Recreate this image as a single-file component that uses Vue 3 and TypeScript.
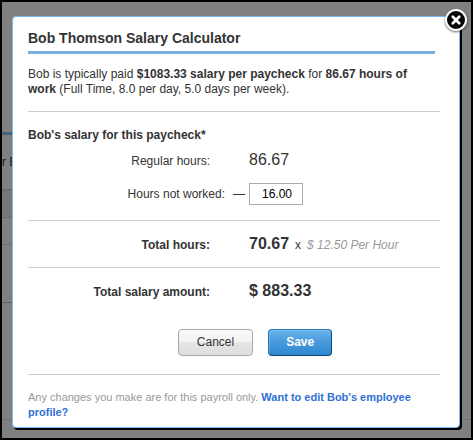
<script setup lang="ts">
import { computed, ref } from 'vue'

const open = ref(true)
const regularHours = 86.67
const salary = 1083.33
const notWorked = ref('16.00')

const totalHours = computed(() => regularHours - (parseFloat(notWorked.value) || 0))
const totalSalary = computed(() => Math.floor((totalHours.value * salary * 100) / regularHours) / 100)

function reset(): void {
  notWorked.value = '16.00'
}
</script>

<template>
  <div class="page">
    <div class="backdrop" aria-hidden="true">
      <div class="bar"></div>
      <div class="column-head">r E</div>
      <div class="band"></div>
      <div class="row"></div>
      <div class="panel"></div>
      <div class="footer"></div>
    </div>

    <section v-if="open" class="dialog" role="dialog" aria-labelledby="title">
      <button class="close" type="button" aria-label="Close" @click="open = false">
        <svg viewBox="0 0 26 26" width="26" height="26">
          <circle cx="13" cy="13" r="10" fill="#050505" stroke="#fff" stroke-width="2" />
          <path d="M9.8 9.8l6.4 6.4M16.2 9.8l-6.4 6.4" stroke="#fff" stroke-width="2.8" stroke-linecap="round" />
        </svg>
      </button>

      <h1 id="title">Bob Thomson Salary Calculator</h1>
      <p class="intro">
        Bob is typically paid <b>$1083.33 salary per paycheck</b> for <b>86.67 hours of work</b>
        (Full Time, 8.0 per day, 5.0 days per week).
      </p>

      <form @submit.prevent="open = false">
        <div class="group hours">
          <h2>Bob's salary for this paycheck*</h2>
          <div class="line">
            <span class="label">Regular hours:</span>
            <span class="value">{{ regularHours.toFixed(2) }}</span>
          </div>
          <div class="line entry">
            <label class="label wide" for="not-worked">Hours not worked:</label>
            <span class="minus">—</span>
            <input id="not-worked" v-model="notWorked" type="text" inputmode="decimal" />
          </div>
        </div>

        <div class="group total">
          <span class="label strong">Total hours:</span>
          <output class="value strong" for="not-worked">{{ totalHours.toFixed(2) }}</output>
          <span class="times">x</span>
          <em>$ 12.50 Per Hour</em>
        </div>

        <div class="group amount">
          <div class="line">
            <span class="label strong">Total salary amount:</span>
            <output class="value strong" for="not-worked">$ {{ totalSalary.toFixed(2) }}</output>
          </div>
          <div class="actions">
            <button class="btn" type="button" @click="reset">Cancel</button>
            <button class="btn primary" type="submit">Save</button>
          </div>
        </div>
      </form>

      <p class="note">
        Any changes you make are for this payroll only.
        <a href="#profile">Want to edit Bob's employee profile?</a>
      </p>
    </section>
  </div>
</template>

<style>
body {
  background: #808080;
}
</style>

<style scoped>
.page {
  box-sizing: border-box;
  display: grid;
  min-height: 100vh;
  border: 2px solid #000;
  background: #808080;
  color: #333;
  font: 12px/15px "Liberation Sans", Arial, sans-serif;
}
.backdrop,
.dialog {
  grid-area: 1 / 1;
}
.backdrop {
  display: flex;
  flex-direction: column;
  padding-top: 130px;
  color: #1a1a1a;
  overflow: hidden;
}
.bar,
.column-head,
.band,
.row,
.panel {
  margin-right: 24px;
}
.bar {
  height: 3px;
  background: #44637f;
}
.column-head {
  height: 34px;
  padding-top: 20px;
}
.band {
  height: 26px;
  border-top: 2px solid #6b6b6b;
  border-bottom: 1px dotted #5c5c5c;
  background: #777;
}
.row {
  height: 26px;
  border-bottom: 1px dotted #5c5c5c;
}
.panel {
  height: 57px;
  border-bottom: 1px solid #606060;
}
.footer {
  height: 116px;
  border-bottom: 1px solid #727272;
}
.dialog {
  position: relative;
  align-self: start;
  margin: 14px 11px 10px 10px;
  padding: 12px 19px 7px 15px;
  border: 1px solid #7ab8f5;
  border-radius: 4px;
  background: #fff;
  box-shadow: 2px 2px 0 #000;
}
.close {
  position: absolute;
  top: -10px;
  right: -10px;
  width: 26px;
  height: 26px;
  padding: 0;
  border: 0;
  border-radius: 50%;
  background: none;
  cursor: pointer;
  filter: drop-shadow(0 1px 1px rgba(0, 0, 0, 0.6));
}
.close svg {
  display: block;
}
h1 {
  margin: 0 5px 0 0;
  padding-bottom: 4px;
  border-bottom: 3px solid #7aade0;
  font-size: 14px;
  line-height: 18px;
}
.intro {
  margin: 0;
  padding: 13px 16px 14px 0;
}
h2 {
  margin: 0;
  font-size: 12px;
}
.group {
  border-top: 1px solid #ccc;
}
.line,
.total {
  display: flex;
  align-items: baseline;
}
.hours {
  padding: 16px 0 15px;
}
.hours .line {
  padding-top: 7px;
}
.hours .entry {
  align-items: center;
  padding-top: 13px;
}
.label {
  width: 182px;
  margin-right: 39px;
  text-align: right;
}
.wide {
  width: 197px;
  margin-right: 8px;
}
.minus {
  width: 16px;
}
.value {
  font-size: 16px;
  line-height: 20px;
}
.strong {
  font-weight: bold;
}
input {
  box-sizing: border-box;
  width: 54px;
  height: 22px;
  padding: 0 10px;
  border: 1px solid #aaa;
  background: #fff;
  color: #000;
  font: inherit;
  text-align: right;
}
.total {
  padding: 13px 0;
}
.times {
  margin: 0 6px;
}
em {
  color: #999;
}
.amount {
  padding-top: 13px;
}
.actions {
  display: flex;
  justify-content: center;
  gap: 15px;
  padding: 28px 0 18px;
  margin-left: 42px;
}
.btn {
  height: 27px;
  padding: 0 18px;
  border: 1px solid #a9a9a9;
  border-radius: 4px;
  background: linear-gradient(#fafafa, #f2f2f2 49%, #e6e6e6 50%, #ddd);
  color: #333;
  font: inherit;
  cursor: pointer;
}
.primary {
  padding: 0 17px;
  border-color: #1b75bd #0c4a80 #0b4272 #1b75bd;
  background: linear-gradient(#6ab3ec, #4799dc 50%, #2d87cf);
  box-shadow: inset 1px 1px 0 rgba(255, 255, 255, 0.2);
  color: #fff;
  font-weight: bold;
}
.note {
  margin: 0;
  padding: 15px 0 0;
  border-top: 1px solid #ccc;
  color: #999;
  font-size: 11px;
}
.note a {
  color: #2f6fd6;
  font-weight: bold;
  text-decoration: none;
}
</style>
